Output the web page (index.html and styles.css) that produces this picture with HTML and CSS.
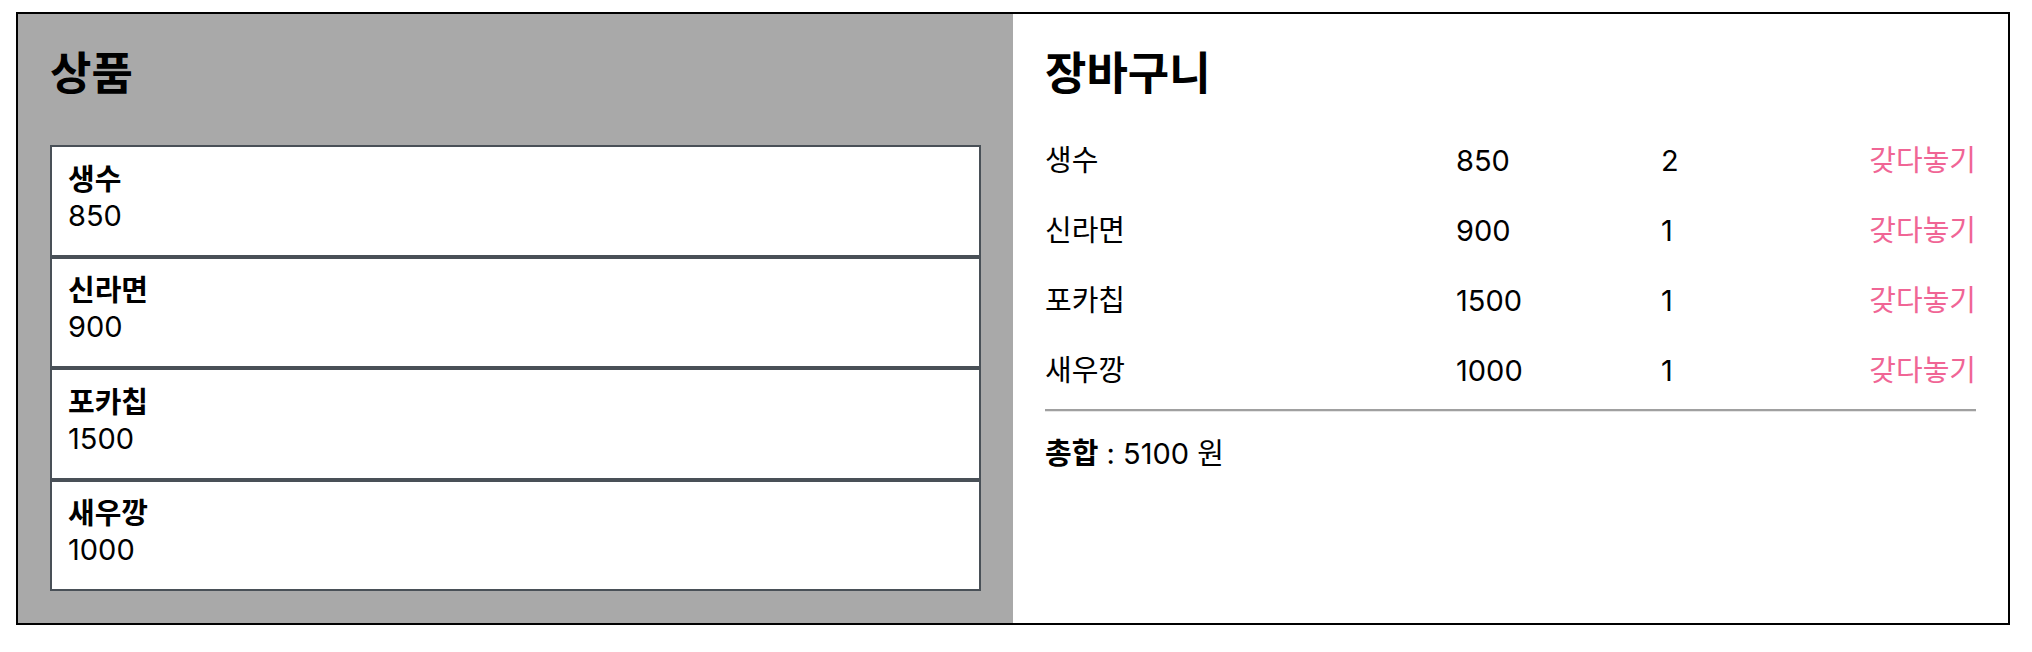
FILE: index.html
```html
<!DOCTYPE html>
<html lang="ko">
<head>
<meta charset="utf-8">
<title>상품 / 장바구니</title>
<link rel="stylesheet" href="styles.css">
</head>
<body>
<div class="app">
  <section class="products">
    <h1 class="title">상품</h1>
    <ul class="product-list">
      <li class="product"><div class="product-name">생수</div><div class="product-price">850</div></li>
      <li class="product"><div class="product-name">신라면</div><div class="product-price">900</div></li>
      <li class="product"><div class="product-name">포카칩</div><div class="product-price">1500</div></li>
      <li class="product"><div class="product-name">새우깡</div><div class="product-price">1000</div></li>
    </ul>
  </section>
  <section class="cart">
    <h1 class="title">장바구니</h1>
    <div class="cart-list">
      <div class="cart-item"><span>생수</span><span>850</span><span>2</span><span class="remove">갖다놓기</span></div>
      <div class="cart-item"><span>신라면</span><span>900</span><span>1</span><span class="remove">갖다놓기</span></div>
      <div class="cart-item"><span>포카칩</span><span>1500</span><span>1</span><span class="remove">갖다놓기</span></div>
      <div class="cart-item"><span>새우깡</span><span>1000</span><span>1</span><span class="remove">갖다놓기</span></div>
    </div>
    <hr class="divider">
    <div class="total"><b>총합</b> : 5100 원</div>
  </section>
</div>
</body>
</html>
```
FILE: styles.css
```css
html, body {
  margin: 0;
  padding: 0;
  background: #fff;
}
body {
  font-family: Inter, "Noto Sans CJK KR", "Noto Sans", sans-serif;
  color: #000;
}
.app {
  display: flex;
  margin: 12px 22px 0 16px;
  border: 2px solid #000;
}
.products {
  flex: 1;
  background: #a9a9a9;
  padding: 32px;
}
.cart {
  flex: 1;
  background: #fff;
  padding: 32px;
}
.title {
  margin: 0 0 49px;
  font-family: "Noto Sans CJK KR", sans-serif;
  font-size: 45px;
  line-height: 50px;
  font-weight: 700;
}
.cart .title {
  margin-bottom: 28px;
}
.product-list {
  list-style: none;
  margin: 0;
  padding: 0;
}
.product {
  background: #fff;
  border: 2px solid #495057;
  padding: 14.5px 16px 21px;
  font-size: 29px;
  line-height: 36px;
}
.product-name {
  font-weight: 700;
}
.product-price {
  font-weight: 400;
}
.cart-list {
  display: flex;
  flex-direction: column;
}
.cart-item {
  display: grid;
  grid-template-columns: 411px 205px 1fr auto;
  font-size: 29px;
  line-height: 38px;
  padding: 17.5px 0 14.5px;
  font-weight: 400;
}
.remove {
  color: #f06595;
}
.divider {
  margin: 5px 0 0;
  border: 0;
  border-top: 2px solid #a0a0a0;
  border-bottom: 1px solid #e6e6e6;
  height: 0;
}
.total {
  margin-top: 22.5px;
  font-size: 29px;
  line-height: 38px;
  font-weight: 400;
}
.total b {
  font-weight: 700;
}
```
